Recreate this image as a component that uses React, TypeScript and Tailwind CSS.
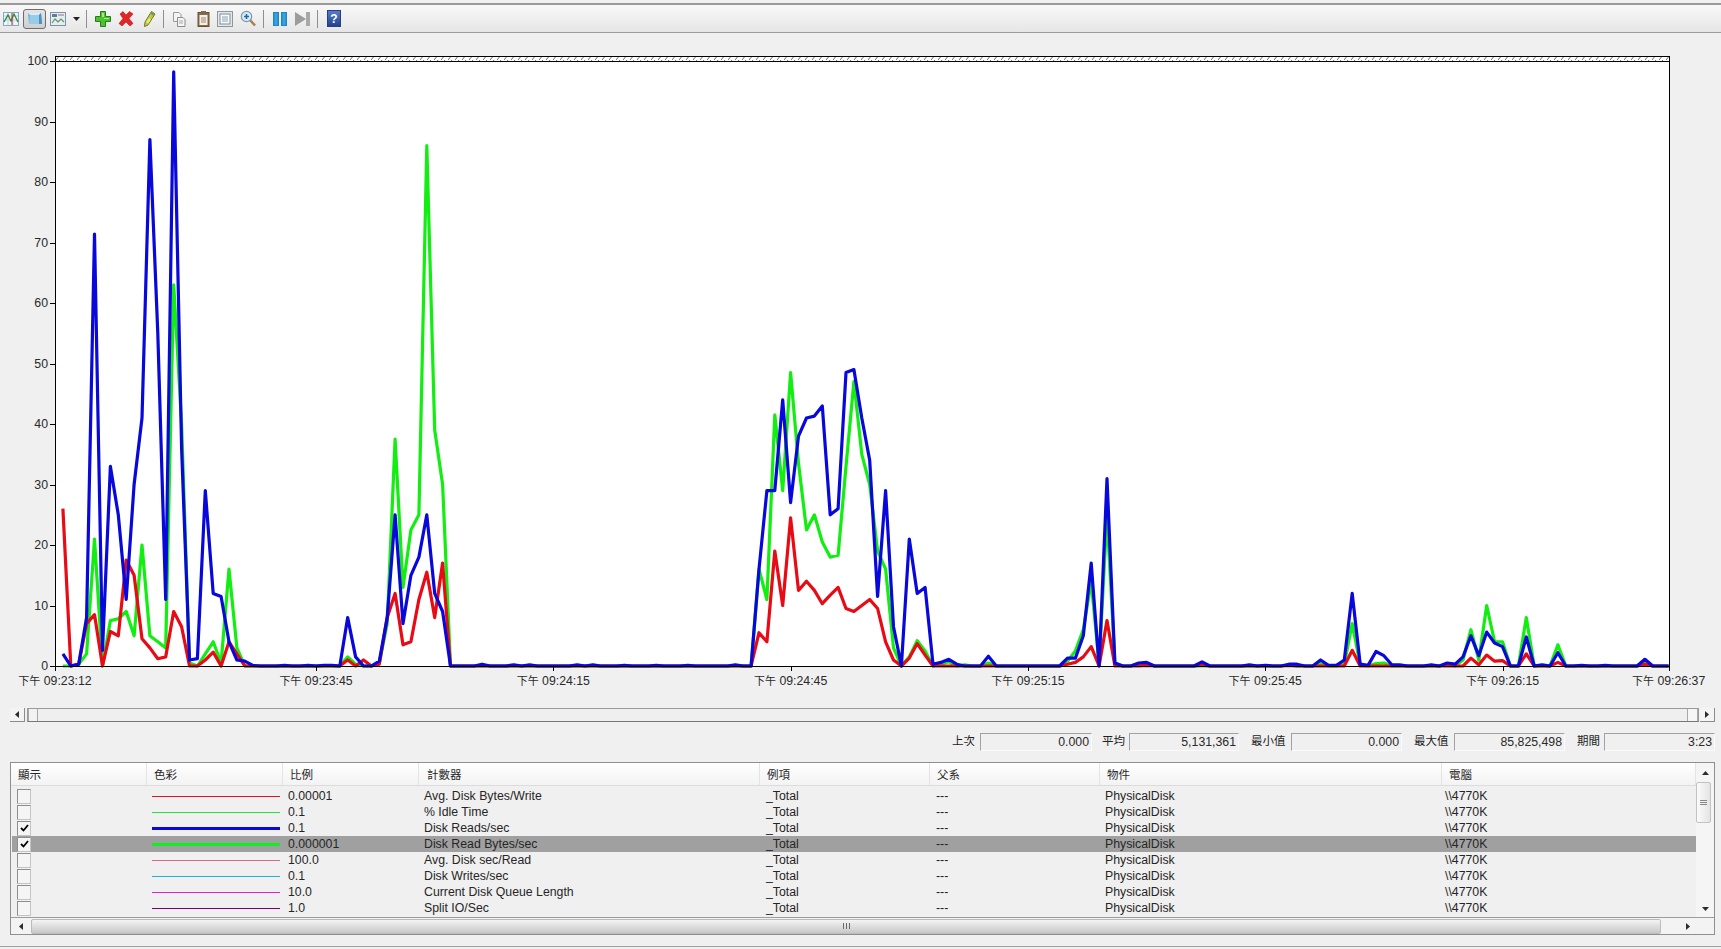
import type { ReactNode } from 'react'

const SAMPLES = 205
const sx = (i: number) => 55 + i * 7.91
const sy = (v: number) => 666 - v * 6.05

const pts = (m: Record<number, number>, from = 1) => {
  const out: string[] = []
  for (let i = from; i <= SAMPLES - 1; i++) out.push(`${sx(i).toFixed(1)},${sy(m[i] ?? 0).toFixed(1)}`)
  return out.join(' ')
}

const RED: Record<number, number> = {
  1: 26, 3: 0.3, 4: 7, 5: 8.5, 7: 5.7, 8: 5, 9: 17.5, 10: 15, 11: 4.5, 12: 3, 13: 1.2, 14: 1.5, 15: 9, 16: 6.5,
  19: 1, 20: 2.3, 22: 4, 23: 2,
  37: 1, 39: 1, 41: 0.3, 42: 8, 43: 12, 44: 3.5, 45: 4, 46: 11, 47: 15.5, 48: 8, 49: 17,
  89: 5.5, 90: 4, 91: 19, 92: 10, 93: 24.5, 94: 12.5, 95: 14, 96: 12.5, 97: 10.3, 98: 11.7, 99: 13, 100: 9.5,
  101: 9, 102: 10, 103: 11, 104: 9.5, 105: 4, 106: 1, 108: 1.3, 109: 3.7, 110: 1.8,
  128: 0.3, 129: 0.6, 130: 1.5, 131: 3.2, 133: 7.5, 138: 0.1, 145: 0.2,
  156: 0.1, 164: 2.6, 179: 1.3, 180: 0.2, 181: 1.8, 182: 0.8, 183: 0.9, 186: 2, 190: 0.6, 201: 0.3,
}

const GREEN: Record<number, number> = {
  3: 0.3, 4: 2, 5: 21, 7: 7.5, 8: 7.8, 9: 9, 10: 5, 11: 20, 12: 5, 13: 4, 14: 3, 15: 63, 16: 40, 17: 0.5,
  19: 2, 20: 4, 21: 0.5, 22: 16, 23: 3,
  37: 1.5, 38: 0.3, 41: 0.5, 42: 7, 43: 37.5, 44: 13, 45: 22.5, 46: 25, 47: 86, 48: 39, 49: 30,
  89: 16, 90: 11, 91: 41.5, 92: 29, 93: 48.5, 94: 33.5, 95: 22.5, 96: 25, 97: 20.5, 98: 18, 99: 18.3, 100: 33,
  101: 47, 102: 35, 103: 30, 104: 19, 105: 16, 106: 3, 108: 1.5, 109: 4.2, 110: 2.5, 112: 0.3, 113: 0.7, 115: 0.2,
  118: 0.5, 128: 0.8, 129: 2.5, 130: 6, 131: 14, 132: 0.3, 133: 25, 134: 0.5, 137: 0.4, 138: 0.4,
  156: 0.2, 160: 0.4, 163: 0.3, 164: 7, 165: 0.2, 167: 0.4, 168: 0.5, 176: 0.3, 178: 1, 179: 6, 180: 1, 181: 10,
  182: 4, 183: 4, 186: 8, 190: 3.5, 201: 0.5,
}

const BLUE: Record<number, number> = {
  1: 2, 3: 0.3, 4: 8, 5: 71.4, 6: 2.6, 7: 33, 8: 25, 9: 11, 10: 30, 11: 41, 12: 87, 13: 55, 14: 11, 15: 98.2, 16: 36,
  17: 1, 18: 1.2, 19: 29, 20: 12, 21: 11.5, 22: 4, 23: 1, 24: 0.8, 25: 0.1,
  29: 0.1, 32: 0.1, 34: 0.1, 35: 0.1, 37: 8, 38: 1.5, 41: 0.8, 42: 8, 43: 25, 44: 7, 45: 15, 46: 18, 47: 25, 48: 12, 49: 9,
  54: 0.3, 58: 0.2, 60: 0.2, 66: 0.2, 68: 0.2, 72: 0.1, 76: 0.1, 80: 0.1, 86: 0.2,
  89: 16, 90: 29, 91: 29, 92: 44, 93: 27, 94: 38, 95: 41, 96: 41.3, 97: 43, 98: 25, 99: 26, 100: 48.5,
  101: 49, 102: 41, 103: 34, 104: 11.5, 105: 29, 106: 6.5, 108: 21, 109: 12, 110: 13, 111: 0.3, 112: 0.6, 113: 1.1, 114: 0.3,
  118: 1.6, 128: 1.3, 129: 1.3, 130: 5, 131: 17, 133: 31, 134: 0.5, 137: 0.5, 138: 0.6, 145: 0.7,
  151: 0.2, 153: 0.1, 156: 0.3, 157: 0.3, 160: 1, 161: 0.1, 162: 0.1, 163: 1, 164: 12, 165: 0.3, 166: 0.1, 167: 2.4, 168: 1.7,
  169: 0.2, 170: 0.2, 174: 0.2, 176: 0.5, 177: 0.3, 178: 1.5, 179: 5, 180: 1.7, 181: 5.6, 182: 3.8, 183: 3.2,
  186: 4.8, 188: 0.2, 190: 2.2, 193: 0.1, 196: 0.1, 201: 1.1,
}

const X_TICKS = [
  { i: 0, t: '09:23:12' },
  { i: 33, t: '09:23:45' },
  { i: 63, t: '09:24:15' },
  { i: 93, t: '09:24:45' },
  { i: 123, t: '09:25:15' },
  { i: 153, t: '09:25:45' },
  { i: 183, t: '09:26:15' },
  { i: 204, t: '09:26:37' },
]

function Chart() {
  const yTicks = [0, 10, 20, 30, 40, 50, 60, 70, 80, 90, 100]
  return (
    <svg width={1721} height={665} viewBox="0 33 1721 665" className="block text-[12.3px] font-['Liberation_Sans','Noto_Sans_CJK_TC',sans-serif]">
      <defs>
        <pattern id="hatch" width="7" height="5" patternUnits="userSpaceOnUse">
          <path d="M0 5 L4 0" stroke="#6e6e6e" strokeWidth="1" />
        </pattern>
      </defs>
      <rect x={55} y={56} width={1614} height={610} fill="#ffffff" />
      <rect x={55} y={56} width={1614} height={5} fill="url(#hatch)" />
      <g fill="none" strokeWidth={3.2} strokeLinejoin="round">
        <polyline points={pts(GREEN)} stroke="#12ee12" />
        <polyline points={pts(RED)} stroke="#e80a14" />
        <polyline points={pts(BLUE)} stroke="#0808dc" />
      </g>
      <path d="M55.5 56 V666.5 H1669.5 V56 M55 56.5 H1670 M55 61.5 H1670" fill="none" stroke="#000" />
      {yTicks.map((v) => (
        <g key={v}>
          <path d={`M50 ${Math.round(sy(v)) + 0.5} H55`} stroke="#000" />
          <text x={48} y={sy(v) + 4} textAnchor="end" fill="#2a2a2a">{v}</text>
        </g>
      ))}
      {X_TICKS.map((x) => (
        <g key={x.i}>
          <path d={`M${Math.round(sx(x.i)) + 0.5} 666 V671`} stroke="#000" />
          <text x={sx(x.i)} y={685} textAnchor="middle" fill="#2a2a2a">
            <tspan className="text-[11px]">下午</tspan> {x.t}
          </text>
        </g>
      ))}
    </svg>
  )
}

function Sep({ ml, mr }: { ml: string; mr: string }) {
  return <div className={`w-px h-[18px] bg-[#8f8f8f] ${ml} ${mr}`} />
}

function Ico({ w = 16, className, children }: { w?: number; className?: string; children: ReactNode }) {
  return (
    <svg width={w} height={18} viewBox={`0 0 ${w} 18`} className={className}>
      {children}
    </svg>
  )
}

function Toolbar() {
  return (
    <div className="flex items-center h-[28px] border-b border-[#9c9c9c] bg-gradient-to-b from-[#f8f8f8] to-[#e6e6e6] pl-[3px]">
      {/* graph view */}
      <Ico>
        <rect x="0.5" y="2.5" width="15" height="13" fill="#eef5fb" stroke="#86a8c4" />
        <path d="M1 6H15M1 10H15M5 3V15M10 3V15" stroke="#b9cfe0" />
        <path d="M1 12L5 5L8 11L11 4L15 12" fill="none" stroke="#2c8a3c" strokeWidth="1.3" />
        <path d="M9 3V15" stroke="#d02030" strokeWidth="1" />
      </Ico>
      {/* freeze button */}
      <div className="ml-[4px] w-[23px] h-[20px] rounded-[3px] border border-[#6e6e6e] bg-gradient-to-b from-[#e4e4e4] to-[#cfcfcf] flex items-center justify-center">
        <Ico>
          <path d="M1 3H14L15 14H2Z" fill="#6fb2dc" />
          <path d="M1 3H14L12 5H3Z" fill="#d6ecf8" />
          <path d="M3 5H12L12 14H2Z" fill="#98cbe8" />
          <path d="M12 5L14 3L15 14H12Z" fill="#4a92c4" />
        </Ico>
      </div>
      <Ico className="ml-[4px]">
        <rect x="0.5" y="2.5" width="15" height="13" fill="#e6edf2" stroke="#7e92a4" />
        <rect x="2" y="4" width="5" height="3" fill="#5b7fa0" />
        <path d="M8 5H14" stroke="#9a6a8a" />
        <path d="M2 13L5 9L8 12L11 9L14 12" fill="none" stroke="#5a9a60" strokeWidth="1.2" />
      </Ico>
      <svg width="7" height="4" viewBox="0 0 7 4" className="ml-[7px]">
        <path d="M0 0H7L3.5 4Z" fill="#222" />
      </svg>
      <Sep ml="ml-[6px]" mr="mr-[8px]" />
      {/* add */}
      <Ico>
        <path d="M5.5 1.5H10.5V6.5H15.5V11.5H10.5V16.5H5.5V11.5H0.5V6.5H5.5Z" fill="#4cc22c" stroke="#2c7a1e" />
        <path d="M7 3H9V8H14V9H9V7H7Z" fill="#a6ea80" />
      </Ico>
      {/* remove */}
      <Ico className="ml-[7px]">
        <path d="M2 4L5 1.5L8 5L11.5 1.5L15 4L11 8.5L15 13.5L12 16L8 12L4 16L1 13.5L5 8.5Z" fill="#e02626" stroke="#b81818" strokeWidth="0.6" />
      </Ico>
      {/* highlight */}
      <Ico w={13} className="ml-[9px]">
        <path d="M8.5 1.5L12 4L5 15L1.5 16.5L2 12Z" fill="#c8c83a" stroke="#6e7a2c" />
        <path d="M8.5 1.5L12 4L10.5 6L7 3.6Z" fill="#7a9a4a" />
        <path d="M3 12L5.5 13.5L8 9L6 8Z" fill="#e9e87a" />
      </Ico>
      <Sep ml="ml-[7px]" mr="mr-[8px]" />
      {/* copy */}
      <Ico w={14}>
        <path d="M1.5 2.5H7L9 4.5V11.5H1.5Z" fill="#f4f4f4" stroke="#9a9a9a" />
        <path d="M5.5 7.5H11L13 9.5V16.5H5.5Z" fill="#f4f4f4" stroke="#8c8c8c" />
        <path d="M7 11H11M7 13H11" stroke="#a8a8a8" />
      </Ico>
      {/* paste */}
      <Ico w={13} className="ml-[11px]">
        <rect x="1" y="2.5" width="11" height="14" fill="#8a6c4a" stroke="#6a5032" />
        <rect x="2.5" y="5" width="8" height="10" fill="#f4efe6" />
        <rect x="4" y="1" width="5" height="3" fill="#7a6a5a" />
        <path d="M4 8H9M4 10H9M4 12H9" stroke="#9a8a76" />
      </Ico>
      {/* properties */}
      <Ico className="ml-[7px]">
        <rect x="0.5" y="1.5" width="15" height="15" fill="#e4e8ea" stroke="#8b979e" />
        <rect x="3" y="4" width="10" height="10" fill="#f8f8f8" stroke="#7e8e98" />
        <path d="M5 7H11M5 9H11M5 11H11" stroke="#88a4b4" />
      </Ico>
      {/* zoom */}
      <Ico className="ml-[7px]">
        <path d="M10 10L15 15.5" stroke="#a8824e" strokeWidth="2.6" />
        <circle cx="6.5" cy="6.5" r="5.2" fill="#d8ecf8" stroke="#7e98ac" strokeWidth="1.2" />
        <path d="M4 6.5H9M6.5 4V9" stroke="#2468a8" strokeWidth="1.6" />
      </Ico>
      <Sep ml="ml-[7px]" mr="mr-[9px]" />
      {/* pause */}
      <Ico w={14}>
        <rect x="0" y="2" width="6" height="14" fill="#1e86c6" />
        <rect x="8" y="2" width="6" height="14" fill="#1e86c6" />
        <rect x="1.5" y="3" width="3" height="12" fill="#3aa2de" />
        <rect x="9.5" y="3" width="3" height="12" fill="#3aa2de" />
      </Ico>
      {/* step */}
      <Ico className="ml-[8px]">
        <path d="M0 2L11 9L0 16Z" fill="#9c9c9c" />
        <rect x="11" y="2" width="4" height="14" fill="#a8a8a8" />
      </Ico>
      <Sep ml="ml-[6px]" mr="mr-[9px]" />
      {/* help */}
      <div className="w-[14px] h-[17px] bg-gradient-to-b from-[#5a7cc8] to-[#24438e] border border-[#2a3f80] flex items-center justify-center text-white text-[12px] font-bold font-['Liberation_Sans',sans-serif]">
        ?
      </div>
    </div>
  )
}

function Arrow({ dir, className }: { dir: 'l' | 'r' | 'u' | 'd'; className?: string }) {
  const d = { l: 'M4 0V7L0 3.5Z', r: 'M0 0V7L4 3.5Z', u: 'M0 4H7L3.5 0Z', d: 'M0 0H7L3.5 4Z' }[dir]
  const horiz = dir === 'l' || dir === 'r'
  return (
    <svg width={horiz ? 4 : 7} height={horiz ? 7 : 4} viewBox={horiz ? '0 0 4 7' : '0 0 7 4'} className={className}>
      <path d={d} fill="#2c2c2c" />
    </svg>
  )
}

function Timeline() {
  return (
    <div className="flex items-center h-[14px] ml-[10px] mr-[6px] mt-[10px]">
      <div className="w-[15px] h-[14px] bg-[#f4f4f4] border-r border-b border-[#8c8c8c] flex items-center justify-center">
        <Arrow dir="l" />
      </div>
      <div className="ml-[2px] flex-1 h-[14px] border border-[#9a9a9a] border-b-[#777777] bg-[#efefef] flex justify-between">
        <div className="w-[10px] bg-[#f2f2f2] border-x border-[#a8a8a8]" />
        <div className="w-[11px] bg-[#f6f6f6] border-x border-[#a8a8a8]" />
      </div>
      <div className="ml-[1px] w-[15px] h-[14px] bg-[#f4f4f4] border-r border-b border-[#8c8c8c] flex items-center justify-center">
        <Arrow dir="r" />
      </div>
    </div>
  )
}

function Stat({ label, value, labelW, boxW, ml }: { label: string; value: string; labelW: string; boxW: string; ml: string }) {
  return (
    <div className={`flex items-center ${ml}`}>
      <span className={`text-[11.5px] text-[#222222] ${labelW}`}>{label}</span>
      <div className={`h-[18px] ${boxW} border-l border-t border-[#a2a2a2] border-r border-r-[#fbfbfb] border-b border-b-[#fbfbfb] text-right pr-[2px] leading-[17px] text-[12.3px] text-[#2a2a2a]`}>
        {value}
      </div>
    </div>
  )
}

const ROWS = [
  { on: false, color: 'bg-[#d81820]', h: 'h-px', scale: '0.00001', name: 'Avg. Disk Bytes/Write' },
  { on: false, color: 'bg-[#28e040]', h: 'h-px', scale: '0.1', name: '% Idle Time' },
  { on: true, color: 'bg-[#0808dc]', h: 'h-[3px]', scale: '0.1', name: 'Disk Reads/sec' },
  { on: true, color: 'bg-[#10f020]', h: 'h-[3px]', scale: '0.000001', name: 'Disk Read Bytes/sec', sel: true },
  { on: false, color: 'bg-[#d86a96]', h: 'h-px', scale: '100.0', name: 'Avg. Disk sec/Read' },
  { on: false, color: 'bg-[#20b4d4]', h: 'h-px', scale: '0.1', name: 'Disk Writes/sec' },
  { on: false, color: 'bg-[#e020d0]', h: 'h-px', scale: '10.0', name: 'Current Disk Queue Length' },
  { on: false, color: 'bg-[#740074]', h: 'h-px', scale: '1.0', name: 'Split IO/Sec' },
]

const HEADERS = [
  { t: '顯示', w: 'w-[136px]', p: 'pl-[7px]' },
  { t: '色彩', w: 'w-[136px]', p: 'pl-[7px]' },
  { t: '比例', w: 'w-[136px]', p: 'pl-[7px]' },
  { t: '計數器', w: 'w-[341px]', p: 'pl-[8px]' },
  { t: '例項', w: 'w-[170px]', p: 'pl-[7px]' },
  { t: '父系', w: 'w-[170px]', p: 'pl-[7px]' },
  { t: '物件', w: 'w-[342px]', p: 'pl-[7px]' },
  { t: '電腦', w: 'flex-1', p: 'pl-[7px]' },
]

function Check({ on }: { on: boolean }) {
  return (
    <div className="ml-[5px] w-[14px] h-[15px] shrink-0 border border-[#8e8e8e] border-r-[#c4c4c4] border-b-[#c4c4c4] bg-[#f5f5f5] flex items-center justify-center">
      {on && (
        <svg width="9" height="8" viewBox="0 0 9 8">
          <path d="M1 4L3.5 6.5L8 1" fill="none" stroke="#000" strokeWidth="1.8" />
        </svg>
      )}
    </div>
  )
}

function Legend() {
  return (
    <div className="ml-[10px] mr-[6px] mt-[11px] h-[173px] border border-[#8f8f8f] flex flex-col text-[12.3px] text-[#262626]">
      <div className="flex h-[24px] shrink-0">
        <div className="flex-1 flex h-[23px] border-b border-[#dcdcdc] bg-gradient-to-b from-[#ffffff] to-[#f3f3f3]">
          {HEADERS.map((h) => (
            <div key={h.t} className={`${h.w} ${h.p} shrink-0 border-r border-[#e4e4e4] text-[11.5px] leading-[24px]`}>
              {h.t}
            </div>
          ))}
        </div>
        <div className="w-[18px] h-[23px] bg-[#f5f5f5] flex justify-center pt-[8px]">
          <Arrow dir="u" />
        </div>
      </div>
      <div className="flex flex-1 min-h-0">
        <div className="flex-1 pt-[1px]">
          {ROWS.map((r) => (
            <div key={r.name} className={`flex items-center h-[16px] ${r.sel ? 'bg-[#a0a0a0]' : ''} ml-[1px]`}>
              <div className="w-[135px] shrink-0">
                <Check on={r.on} />
              </div>
              <div className="w-[136px] shrink-0 pl-[5px]">
                <div className={`w-[128px] ${r.h} ${r.color}`} />
              </div>
              <div className="w-[136px] shrink-0 pl-[5px]">{r.scale}</div>
              <div className="w-[341px] shrink-0 pl-[5px]">{r.name}</div>
              <div className="w-[170px] shrink-0 pl-[6px]">_Total</div>
              <div className="w-[170px] shrink-0 pl-[6px]">---</div>
              <div className="w-[342px] shrink-0 pl-[5px]">PhysicalDisk</div>
              <div className="flex-1 pl-[3px]">\\4770K</div>
            </div>
          ))}
        </div>
        <div className="w-[18px] bg-[#f5f5f5] flex flex-col items-center relative">
          <div className="mt-[-5px] w-[15px] h-[41px] mr-[3px] rounded-[2px] border border-[#c2c2c2] bg-gradient-to-r from-[#fbfbfb] to-[#e4e4e4] flex flex-col items-center justify-center gap-[1px]">
            <div className="w-[7px] h-px bg-[#888888]" />
            <div className="w-[7px] h-px bg-[#888888]" />
            <div className="w-[7px] h-px bg-[#888888]" />
          </div>
          <Arrow dir="d" className="mt-[84px]" />
        </div>
      </div>
      <div className="flex items-center h-[17px] shrink-0 border-t border-[#9c9c9c] bg-[#f3f3f3]">
        <Arrow dir="l" className="ml-[8px]" />
        <div className="ml-[8px] w-[1630px] h-[15px] rounded-[2px] border border-[#bcbcbc] bg-gradient-to-b from-[#f4f4f4] to-[#c8c8c8] flex items-center justify-center gap-px">
          <div className="w-px h-[6px] bg-[#6a6a6a]" />
          <div className="w-px h-[6px] ml-[1px] bg-[#6a6a6a]" />
          <div className="w-px h-[6px] ml-[1px] bg-[#6a6a6a]" />
        </div>
        <Arrow dir="r" className="ml-[25px]" />
      </div>
    </div>
  )
}

export default function App() {
  return (
    <div className="w-[1721px] h-[949px] overflow-hidden bg-[#f0f0f0] flex flex-col font-['Liberation_Sans','Noto_Sans_CJK_TC',sans-serif]">
      <div className="mt-[3px] h-[2px] shrink-0 bg-[#9a9a9a]" />
      <Toolbar />
      <Chart />
      <Timeline />
      <div className="flex justify-end items-center h-[18px] mt-[11px] pr-[6px]">
        <Stat label="上次" value="0.000" labelW="w-[28px]" boxW="w-[112px]" ml="ml-0" />
        <Stat label="平均" value="5,131,361" labelW="w-[27px]" boxW="w-[110px]" ml="ml-[10px]" />
        <Stat label="最小值" value="0.000" labelW="w-[40px]" boxW="w-[111px]" ml="ml-[12px]" />
        <Stat label="最大值" value="85,825,498" labelW="w-[40px]" boxW="w-[111px]" ml="ml-[12px]" />
        <Stat label="期間" value="3:23" labelW="w-[27px]" boxW="w-[111px]" ml="ml-[12px]" />
      </div>
      <Legend />
      <div className="mt-[11px] h-[1px] shrink-0 bg-[#a0a0a0]" />
    </div>
  )
}
